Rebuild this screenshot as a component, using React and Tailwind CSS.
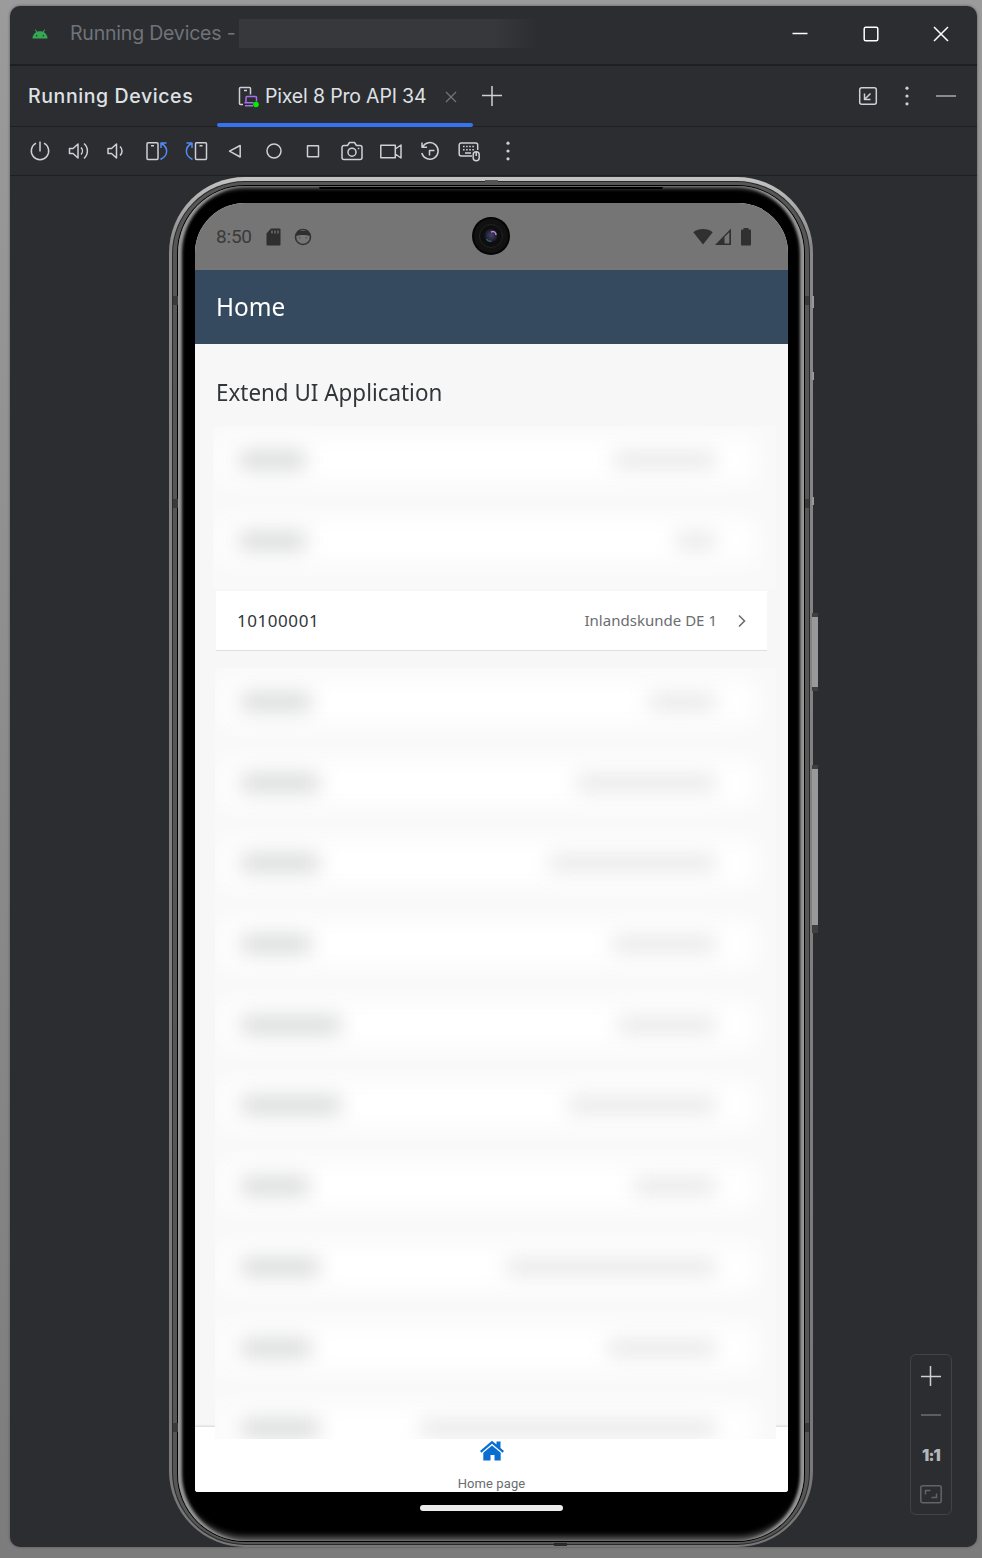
import React from "react";

const line = {
  fill: "none",
  stroke: "#ced0d6",
  strokeWidth: 1.5,
  strokeLinejoin: "round",
};

function Glyph({ children, className = "" }) {
  return (
    <svg width="24" height="24" viewBox="0 0 24 24" className={`block shrink-0 ${className}`} {...line}>
      {children}
    </svg>
  );
}

function DotsMenu() {
  return (
    <Glyph>
      <g fill="#ced0d6" stroke="none">
        <circle cx="12" cy="4.2" r="1.6" />
        <circle cx="12" cy="12" r="1.6" />
        <circle cx="12" cy="19.8" r="1.6" />
      </g>
    </Glyph>
  );
}

function TitleBar() {
  return (
    <div className="flex h-[60px] shrink-0 items-center border-b-2 border-[#1e1f22] pl-[22px] pr-[24px] pb-[3px]">
      <svg width="16" height="10" viewBox="0 0 16 10" className="block">
        <path d="M4.700 3.200L3.400.6M11.300 3.200L12.600.6" stroke="#38b35d" strokeWidth="1" fill="none" />
        <path d="M.4 9.500C.8 5 4 2.300 8 2.300S15.200 5 15.600 9.500Z" fill="#34a853" />
        <circle cx="4.700" cy="6.700" r=".8" fill="#2b2d30" />
        <circle cx="11.300" cy="6.700" r=".8" fill="#2b2d30" />
      </svg>
      <span className="ml-[22px] w-[169px] whitespace-nowrap pt-px text-[19.500px] tracking-[-0.2px] text-[#6f737a]">Running Devices -</span>
      <div className="h-[29px] w-[300px] bg-linear-to-r from-[#36383b] from-85% to-[#2b2d30]" />
      <div className="ml-auto flex items-center gap-[46.500px]">
        <Glyph><path d="M4.500 11.500h15" stroke="#fff" /></Glyph>
        <Glyph><rect x="5.200" y="5.200" width="13.600" height="13.600" rx="1.500" stroke="#fff" /></Glyph>
        <Glyph><path d="M5 5l14 14M19 5L5 19" stroke="#fff" /></Glyph>
      </div>
    </div>
  );
}

function TabBar() {
  return (
    <div className="flex h-[61px] shrink-0 items-center border-b border-[#1e1f22] pl-[18px] pr-[19px]">
      <span className="w-[189px] whitespace-nowrap pt-0.5 text-[19.500px] font-medium tracking-[0.6px] text-[#dfe1e5]">Running Devices</span>
      <div className="relative flex h-full w-[256px] items-center pl-5">
        <svg width="24" height="24" viewBox="0 0 24 24" className="block" fill="none">
          <path d="M6 20.500H3.500a1 1 0 0 1-1-1v-15a1 1 0 0 1 1-1h9a1 1 0 0 1 1 1v6M7 6.500h3" stroke="#ced0d6" strokeWidth="1.500" />
          <path d="M9 19v-5.500a1 1 0 0 1 1-1h8.500a1 1 0 0 1 1 1v4M7.500 18.700h9M8 21.700h8" stroke="#a571e6" strokeWidth="1.500" />
          <circle cx="19" cy="20.500" r="2.800" fill="#00f000" />
        </svg>
        <span className="ml-1 whitespace-nowrap pt-0.5 text-[19.500px] tracking-[-0.17px] text-[#dfe1e5]">Pixel 8 Pro API 34</span>
        <svg width="12" height="12" viewBox="0 0 12 12" className="absolute top-[25px] left-[228px]">
          <path d="M1 1l10 10M11 1L1 11" stroke="#6f737a" strokeWidth="1.300" />
        </svg>
        <div className="absolute bottom-[-1px] left-0 h-1 w-full rounded-full bg-[#3574f0]" />
      </div>
      <svg width="20" height="20" viewBox="0 0 20 20" className="ml-[9px] block">
        <path d="M10 0v20M0 9.500h20" stroke="#ced0d6" strokeWidth="1.500" />
      </svg>
      <div className="ml-auto flex items-center gap-[15px]">
        <Glyph>
          <rect x="3.700" y="3.700" width="16.600" height="16.600" rx="2" />
          <path d="M14.500 9.500l-6 6M8.500 9.500v6h6" />
        </Glyph>
        <DotsMenu />
        <Glyph><path d="M2 12h20" stroke="#a8aaae" /></Glyph>
      </div>
    </div>
  );
}

function ToolBar() {
  return (
    <div className="flex h-[49px] shrink-0 items-center gap-[15px] border-b border-[#1e1f22] pl-[18px]">
      <Glyph><path d="M12 2.500v10M8 4.200a8.700 8.700 0 1 0 8 0" /></Glyph>
      <Glyph>
        <path d="M2.500 9.500H6l5-4.500v14l-5-4.500H2.500zM14 8.500a5 5 0 0 1 0 7M17 4.500a10 10 0 0 1 0 15" />
      </Glyph>
      <Glyph><path d="M2 9.500h3.500l5-4.500v14l-5-4.500H2zM14 7.500a6 6 0 0 1 0 9" /></Glyph>
      <Glyph>
        <rect x="2" y="3.700" width="11" height="16.800" rx="1" />
        <path d="M6 6.800h3" />
        <path d="M21.500 4H16v5M16.500 4.500c7 4 7 12-1 16" stroke="#548af7" />
      </Glyph>
      <Glyph>
        <rect x="11.500" y="3.700" width="11" height="16.800" rx="1" />
        <path d="M15.500 6.800h3" />
        <path d="M2.500 4H8v5M7.500 4.500c-7 4-7 12 1 16" stroke="#548af7" />
      </Glyph>
      <Glyph><path d="M17.200 6.500v11.500L6.500 12.200z" /></Glyph>
      <Glyph><circle cx="12" cy="12" r="7" /></Glyph>
      <Glyph><rect x="6.500" y="6.700" width="11" height="11" rx=".3" /></Glyph>
      <Glyph>
        <path d="M4 6.500h3.500l2-3h5l2 3H20a2 2 0 0 1 2 2v10a2 2 0 0 1-2 2H4a2 2 0 0 1-2-2v-10a2 2 0 0 1 2-2z" />
        <circle cx="12" cy="13.200" r="4" />
        <path d="M17.800 9.500h1.500" />
      </Glyph>
      <Glyph><path d="M1.800 6.200h14.500v12.600H1.800zM16.300 10L22 6v13l-5.700-4" /></Glyph>
      <Glyph><path d="M4 3.500v4.700h5M4.500 8a8.300 8.300 0 1 1-.7 6M11.500 16.500v-5h5" /></Glyph>
      <Glyph>
        <path d="M15 17H4.200a2 2 0 0 1-2-2V6a2 2 0 0 1 2-2h14.500a2 2 0 0 1 2 2v5M8 14h6" />
        <path d="M6 7.500h12M6 10.700h12" strokeDasharray="1.600 1.500" />
        <rect x="16.200" y="12.700" width="6" height="9" rx="3" />
        <path d="M19.200 13v4" />
      </Glyph>
      <DotsMenu />
    </div>
  );
}

function SoftRow({ left, right }) {
  return (
    <div className="h-[80.700px] shrink-0 pt-[7px]">
      <div className="relative mr-5 ml-1 h-[54px]">
        <div className="absolute inset-x-0 inset-y-1 bg-white blur-[12px]" />
        <div className="relative flex h-full items-center justify-between pr-[40px] pl-[22px]">
          <div className="h-4 bg-[#8b8e8f]/38 blur-[10px]" style={{ width: left }} />
          <div className="h-[14px] bg-[#999b9d]/28 blur-[10px]" style={{ width: right }} />
        </div>
      </div>
    </div>
  );
}

const firstRows = [[67, 102], [67, 40]];
const laterRows = [
  [70, 67], [78, 140], [78, 167], [70, 104], [100, 98], [100, 148],
  [68, 82], [78, 210], [70, 108], [78, 296],
];

function StatusBar() {
  return (
    <div className="flex h-[67px] shrink-0 items-center bg-[#757575] pr-9 pl-[21px] font-[Roboto,sans-serif]">
      <span className="w-[50px] pt-0.5 text-[19px] tracking-[-0.2px] text-[#3a3a3a]">8:50</span>
      <svg width="15" height="18" viewBox="0 0 15 18" className="block">
        <path d="M5 .5h8.500a1 1 0 0 1 1 1v15a1 1 0 0 1-1 1h-12a1 1 0 0 1-1-1V5.500z" fill="#2e2e2e" />
        <path d="M6 2.500v3M9 2.500v3M12 2.500v3" stroke="#757575" strokeWidth="1.300" />
      </svg>
      <svg width="18" height="18" viewBox="0 0 18 18" className="ml-[13px] block">
        <circle cx="9" cy="9" r="7.500" fill="none" stroke="#333" strokeWidth="1.600" />
        <path d="M2 7L4 2.500l2 .5h6l2-.5L16 7c-1 1.500-2.500 0-7 0s-6 1.500-7 0z" fill="#2e2e2e" />
        <circle cx="5.800" cy="9.800" r=".6" fill="#333" /><circle cx="12.200" cy="9.800" r=".6" fill="#333" />
      </svg>
      <svg width="59" height="18" viewBox="0 0 59 18" className="ml-auto block">
        <path d="M.3 4.200C5.500-.2 14.500-.2 19.700 4.200L10 16.500z" fill="#303030" />
        <path d="M38 .5v16.500H22z" fill="#303030" />
        <path d="M31.500 9l4.800-4.800v11.300h-4.800z" fill="#757575" />
        <path d="M50.500 0h5v1.500h1.500a1 1 0 0 1 1 1v14a1 1 0 0 1-1 1h-8a1 1 0 0 1-1-1v-14a1 1 0 0 1 1-1h1.500z" fill="#303030" />
      </svg>
    </div>
  );
}

function Screen() {
  return (
    <div className="flex h-[1289px] w-[593px] flex-col overflow-hidden rounded-t-[50px] rounded-b-[3px] bg-[#f7f7f7] font-['Noto_Sans',sans-serif]">
      <StatusBar />
      <div className="flex h-[74px] shrink-0 items-center bg-[#354a5f] pl-[21px] text-[25.500px] text-white">
        <span className="origin-left scale-x-[0.955] pb-0.5">Home</span>
      </div>
      <div className="flex h-[1083px] shrink-0 flex-col">
        <h1 className="h-[82px] shrink-0 pt-[31px] pl-[21px] text-[23px] leading-[34px] whitespace-nowrap text-[#32363a]">
          <span className="inline-block origin-left scale-x-[0.974]">Extend UI Application</span>
        </h1>
        <div className="mr-3 ml-[18px] h-[163px] shrink-0 overflow-hidden bg-[#f9f9f9]">
          {firstRows.map(([l, r], i) => <SoftRow key={i} left={l} right={r} />)}
        </div>
        <div className="mt-0.5 mr-[21px] ml-[21px] flex h-[60px] shrink-0 items-center border-b border-[#dedede] bg-white pr-5 pl-[21px]">
          <span className="text-[17px] tracking-[0.55px] text-[#32363a]">10100001</span>
          <span className="ml-auto text-[15px] tracking-[0.02px] text-[#6a6d70]">Inlandskunde DE 1</span>
          <svg width="10" height="14" viewBox="0 0 10 14" className="ml-5 block">
            <path d="M2 1.500l5.500 5.500L2 12.500" fill="none" stroke="#6a6d70" strokeWidth="1.600" />
          </svg>
        </div>
        <div className="relative z-10 mt-[17px] mr-3 ml-5 h-[771px] shrink-0 overflow-hidden bg-[#f9f9f9]">
          {laterRows.map(([l, r], i) => <SoftRow key={i} left={l} right={r} />)}
        </div>
      </div>
      <div className="flex h-[65px] shrink-0 flex-col items-center bg-white pt-[13px] shadow-[0_-1px_2px_#0002]">
        <svg width="26" height="22" viewBox="0 0 26 22" className="block shrink-0" fill="#0a6ed1">
          <path d="M13 .7l4.500 3.900V1.500h4v6.600l3.500 3-1.400 1.700L13 3.800 2.400 12.800 1 11.100z" />
          <path d="M13 5.400l8.700 7.400v7.700h-6.200v-5.500h-4v5.500H4.300v-7.700z" />
        </svg>
        <span className="mt-[13px] text-[13px] leading-[18px] text-[#6a6d70] font-[Roboto,sans-serif] tracking-[0.1px]">Home page</span>
      </div>
    </div>
  );
}

function Camera() {
  return (
    <svg width="40" height="40" viewBox="0 0 40 40" className="absolute top-[39px] left-[302px]">
      <defs>
        <radialGradient id="lens" cx=".55" cy=".45" r=".55">
          <stop offset="0" stopColor="#503a66" />
          <stop offset=".55" stopColor="#232c40" />
          <stop offset="1" stopColor="#0b0c10" />
        </radialGradient>
      </defs>
      <circle cx="20" cy="20" r="19" fill="#050505" />
      <circle cx="20" cy="20" r="17" fill="#111" />
      <circle cx="20" cy="20" r="11.500" fill="#0e0e0e" stroke="#222" />
      <circle cx="19.500" cy="20" r="7" fill="url(#lens)" />
      <path d="M20 16c3-1.500 5 .5 5 3" fill="none" stroke="#b488c8" strokeWidth="1.500" />
      <path d="M15.500 23c1 2 3 2.500 5 2" fill="none" stroke="#365a70" strokeWidth="1.500" />
    </svg>
  );
}

function Phone() {
  return (
    <div className="relative mt-px h-[1370px] w-[644px]">
      <div className="absolute top-[436px] left-[643px] h-[78px] w-[6px] border-y-4 border-[#3f3f3f] bg-[#999]" />
      <div className="absolute top-[588px] left-[643px] h-[168px] w-[6px] border-t-4 border-b-8 border-[#3f3f3f] bg-[#999]" />
      <div className="h-full rounded-[76px] bg-linear-to-b from-[#c4c4c4] via-[#888] via-5% to-[#777] px-[3px] pt-1 pb-0.5">
        <div className="h-full rounded-[73px] bg-[#292929] p-px">
          <div className="h-full rounded-[72px] bg-[#565656] px-1 pt-[3px] pb-0.5">
            <div className="h-full rounded-[68px] bg-black p-px">
              <div className="h-full rounded-[67px] bg-black px-[17px] pt-[17px] shadow-[inset_5px_0_3px_-1px_#999,inset_-5px_0_3px_-1px_#999,inset_0_3px_4px_-1px_#777,inset_0_-6px_6px_-2px_#666]">
                <Screen />
                <div className="mx-auto mt-[13px] h-[6px] w-[143px] rounded-full bg-[#ececec]" />
              </div>
            </div>
          </div>
        </div>
      </div>
      <div className="absolute top-2.5 left-[150px] h-0.5 w-[344px] rounded-b-full bg-black" />
      <div className="absolute top-[3px] left-[316px] h-[5px] w-[13px] bg-[#555]" />
      <div className="absolute top-[1366px] left-[385px] h-[3px] w-[13px] bg-[#2a2a2a]" />
      <div className="absolute top-[119px] left-1 h-[9px] w-[5px] bg-[#3a3a3a]" />
      <div className="absolute top-[322px] left-1 h-[9px] w-[5px] bg-[#3a3a3a]" />
      <div className="absolute top-[1246px] left-1 h-[9px] w-[5px] bg-[#3a3a3a]" />
      <div className="absolute top-[119px] left-[636px] h-[9px] w-1 bg-[#3a3a3a]" />
      <div className="absolute top-[322px] left-[636px] h-[9px] w-1 bg-[#3a3a3a]" />
      <div className="absolute top-[1246px] left-[636px] h-[9px] w-1 bg-[#3a3a3a]" />
      <div className="absolute top-[119px] left-[643px] h-3 w-0.5 bg-[#999]" />
      <div className="absolute top-[195px] left-[643px] h-2 w-0.5 bg-[#999]" />
      <div className="absolute top-[320px] left-[643px] h-2 w-0.5 bg-[#999]" />
      <Camera />
    </div>
  );
}

function ZoomControls() {
  return (
    <div className="absolute right-[25px] bottom-8 flex h-[161px] w-[42px] flex-col items-center rounded-md border border-[#424346] pt-[11px]">
      <svg width="20" height="20" viewBox="0 0 20 20" className="block shrink-0"><path d="M9.500 0v20M0 10.500h20" stroke="#ced0d6" strokeWidth="1.500" /></svg>
      <div className="mt-[28px] h-[1.500px] w-5 shrink-0 bg-[#5c5e62]" />
      <span className="mt-[29px] h-5 text-[16px] leading-5 font-black tracking-[-0.8px] text-[#b4b6ba]">1:1</span>
      <svg width="22" height="19" viewBox="0 0 22 19" className="mt-[20px] block shrink-0" fill="none" stroke="#626468" strokeWidth="1.500">
        <rect x=".8" y=".8" width="20.400" height="17" rx="2" />
        <path d="M5.500 9.500v-4h5M16.500 8.500v4h-5" />
      </svg>
    </div>
  );
}

export default function App() {
  return (
    <div className="h-[1558px] w-[982px] overflow-hidden bg-linear-to-b from-[#9b9b9b] to-[#7c7c7c] pt-1.5 pl-2.5 font-[Inter,sans-serif]">
      <div className="flex h-[1541px] w-[967px] flex-col overflow-hidden rounded-[10px] bg-[#2b2d30] shadow-[0_0_3px_#555]">
        <TitleBar />
        <TabBar />
        <ToolBar />
        <div className="relative min-h-0 grow pl-[159px]">
          <Phone />
          <ZoomControls />
        </div>
      </div>
    </div>
  );
}
